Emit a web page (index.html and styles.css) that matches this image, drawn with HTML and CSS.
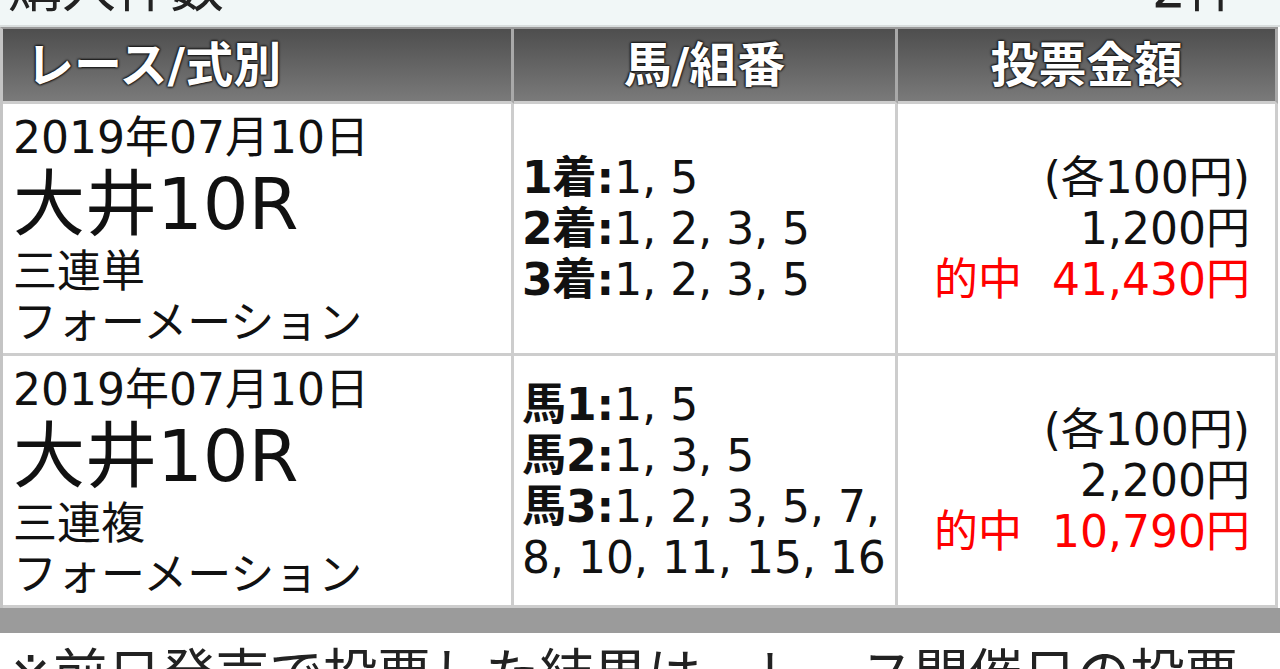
FILE: index.html
```html
<!DOCTYPE html>
<html lang="ja">
<head>
<meta charset="utf-8">
<title>購入履歴</title>
<link rel="stylesheet" href="styles.css">
</head>
<body>
<div class="summary"><span>購入件数</span><span>2件</span></div>
<table class="bets">
  <colgroup><col class="c-race"><col class="c-num"><col class="c-amt"></colgroup>
  <thead>
    <tr><th class="th-race">レース/式別</th><th>馬/組番</th><th>投票金額</th></tr>
  </thead>
  <tbody>
    <tr>
      <td class="race">
        <div class="date">2019年07月10日</div>
        <div class="venue">大井10R</div>
        <div>三連単</div>
        <div>フォーメーション</div>
      </td>
      <td class="nums">
        <div><b>1着:</b>1, 5</div>
        <div><b>2着:</b>1, 2, 3, 5</div>
        <div><b>3着:</b>1, 2, 3, 5</div>
      </td>
      <td class="amt">
        <div>(各100円)</div>
        <div>1,200円</div>
        <div class="hit"><span class="hit-label">的中</span>41,430円</div>
      </td>
    </tr>
    <tr>
      <td class="race">
        <div class="date">2019年07月10日</div>
        <div class="venue">大井10R</div>
        <div>三連複</div>
        <div>フォーメーション</div>
      </td>
      <td class="nums">
        <div><b>馬1:</b>1, 5</div>
        <div><b>馬2:</b>1, 3, 5</div>
        <div><b>馬3:</b>1, 2, 3, 5, 7, 8, 10, 11, 15, 16</div>
      </td>
      <td class="amt">
        <div>(各100円)</div>
        <div>2,200円</div>
        <div class="hit"><span class="hit-label">的中</span>10,790円</div>
      </td>
    </tr>
  </tbody>
</table>
<div class="bar"></div>
<p class="note">※前日発売で投票した結果は、レース開催日の投票</p>
</body>
</html>
```

FILE: styles.css
```css
html, body {
  margin: 0;
  padding: 0;
  background: #ffffff;
}

body {
  font-family: "DejaVu Sans", "Noto Sans CJK JP", sans-serif;
  color: #111;
  overflow: hidden;
}

.summary {
  display: flex;
  justify-content: space-between;
  margin-top: -41px;
  padding: 0 40px 6px 8px;
  font-size: 54px;
  line-height: 60px;
  color: #222;
  background: #f1f7f7;
  border-bottom: 2px solid #d9dede;
}

.bets {
  width: 1278px;
  table-layout: fixed;
  border-collapse: separate;
  border-spacing: 0;
  border-top: 2px solid #9a9a9a;
  border-left: 3px solid #c4c4c4;
  font-size: 44px;
  line-height: 51px;
}

.c-race { width: 511px; }
.c-num { width: 384px; }
.c-amt { width: 380px; }

.bets th,
.bets td {
  box-sizing: border-box;
  border-right: 3px solid #cdcdcd;
  border-bottom: 3px solid #cdcdcd;
}

.bets th {
  height: 75px;
  padding: 0;
  font-size: 48px;
  font-weight: bold;
  color: #fff;
  text-align: center;
  vertical-align: middle;
  background: linear-gradient(#4e4e4e, #7a7a7a);
  border-right-color: #a9a9a9;
  text-shadow: 0 -1px 2px #1a1a1a, 0 1px 2px #1a1a1a, 1px 0 2px #1a1a1a, -1px 0 2px #1a1a1a;
}

.bets th.th-race {
  text-align: left;
  padding-left: 23px;
}

.bets td {
  background: #fff;
  vertical-align: middle;
}

.race {
  padding: 8px 0 5px 10px;
}

.race .venue {
  font-size: 72px;
  line-height: 83px;
}

.nums {
  padding: 0 0 0 8px;
}

.nums b {
  font-weight: bold;
}

.amt {
  padding: 0 25px 0 0;
  text-align: right;
}

.hit {
  color: #ff0000;
}

.hit-label {
  margin-right: 30px;
}

.bar {
  height: 25px;
  background: #9b9b9b;
}

.note {
  margin: 0;
  padding: 5px 0 0 8px;
  font-size: 54px;
  line-height: 76px;
  color: #222;
  white-space: nowrap;
}
```
